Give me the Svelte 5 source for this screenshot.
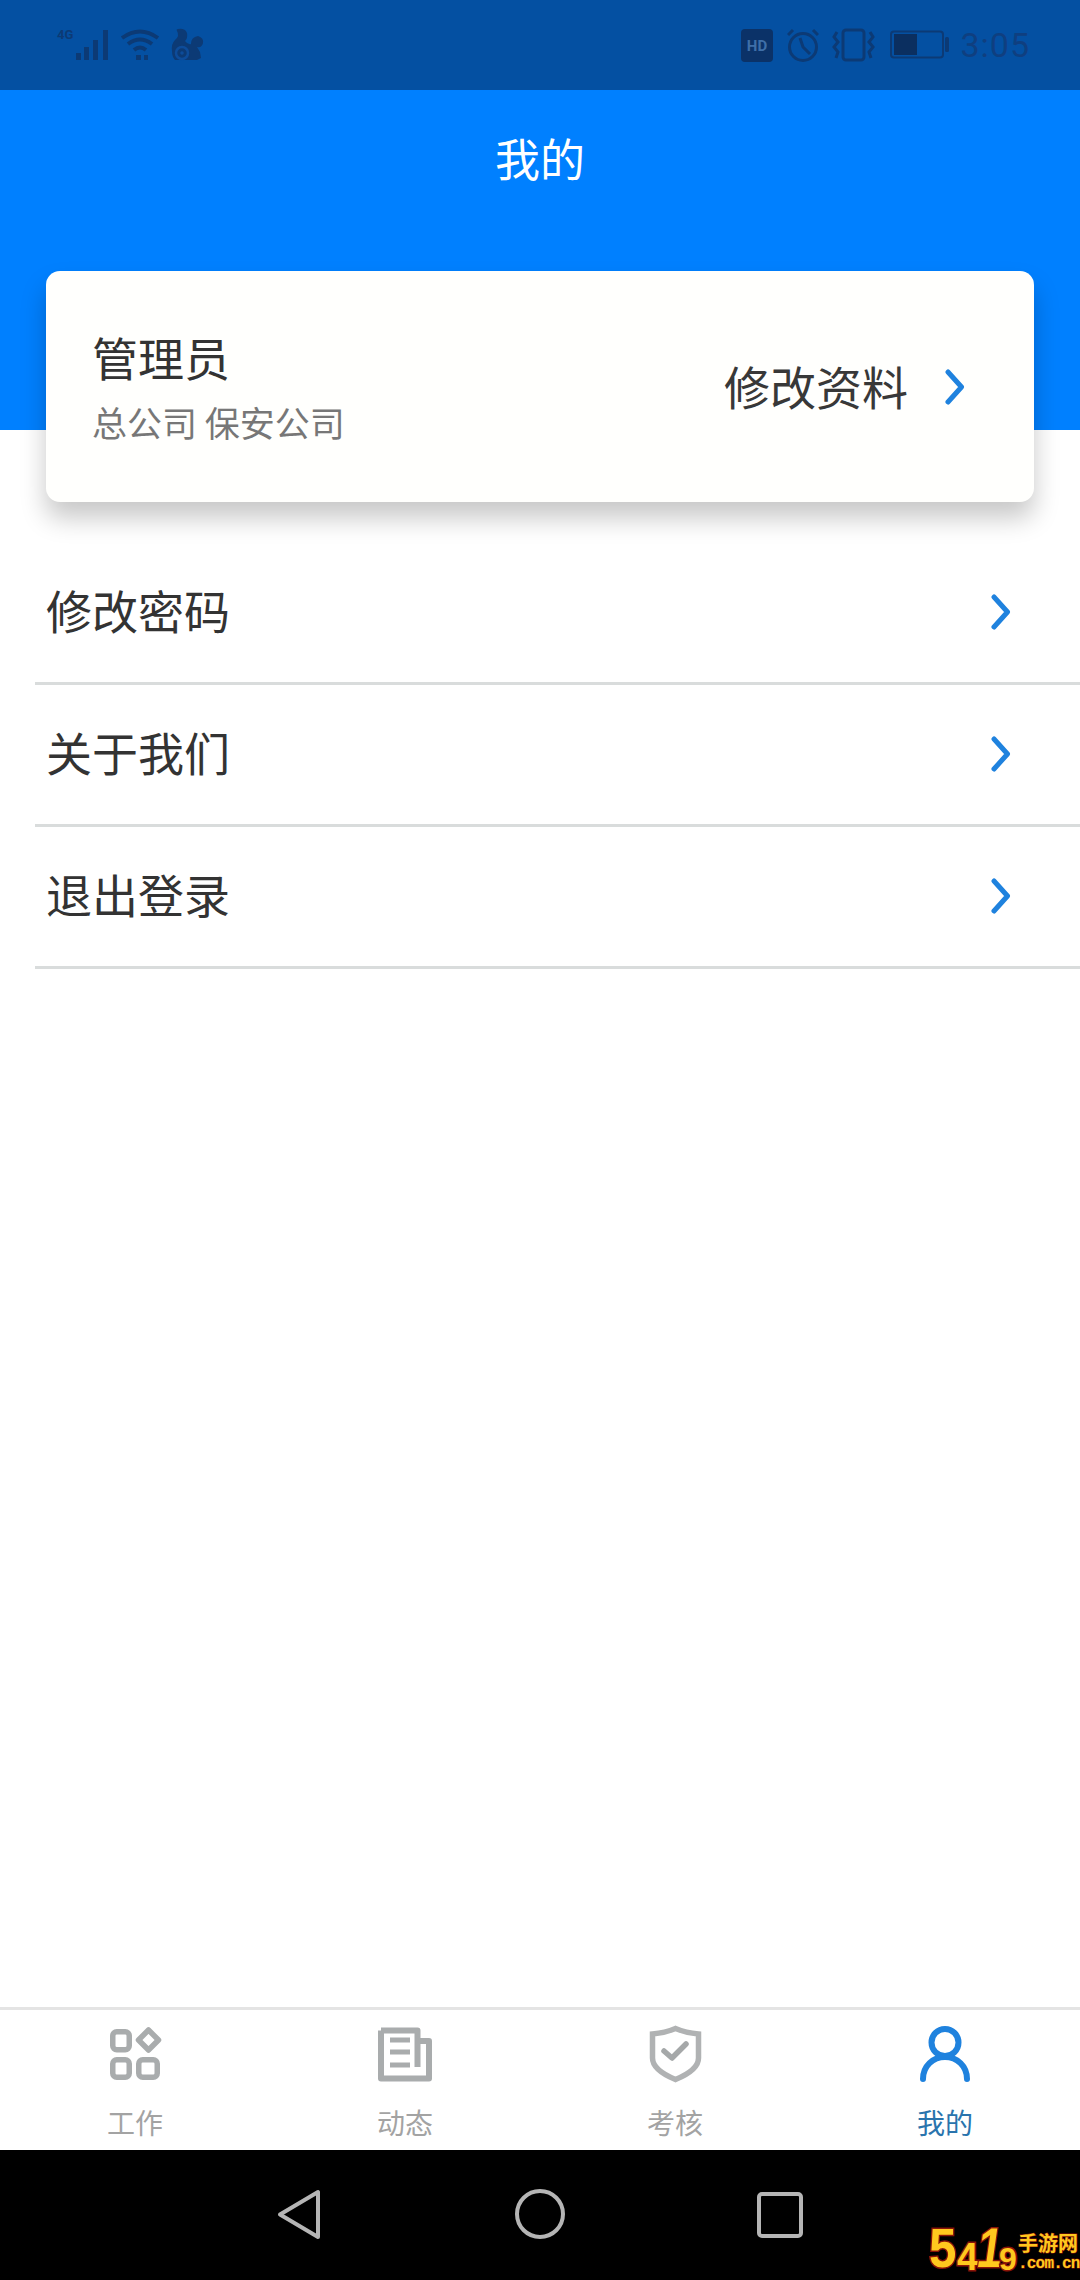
<script>
  const rows = ['修改密码', '关于我们', '退出登录'];
  const tabs = [
    { label: '工作', key: 'work' },
    { label: '动态', key: 'news' },
    { label: '考核', key: 'exam' },
    { label: '我的', key: 'me', active: true }
  ];
</script>

{#snippet chevron()}
  <svg class="chev" width="22" height="36" viewBox="0 0 22 36"><path d="M4 3 L17.500 18 L4 33" fill="none" stroke="#1f82de" stroke-width="5" stroke-linecap="round" stroke-linejoin="round"/></svg>
{/snippet}

<div class="page">
  <div class="status">
    <div class="st-left">
      <span class="net">4G</span>
      <svg width="35" height="34" viewBox="0 0 35 34" fill="#0c3a75"><rect x="1" y="25" width="5" height="7"/><rect x="9" y="19" width="5" height="13"/><rect x="18" y="12" width="5" height="20"/><rect x="28" y="2" width="5" height="30"/></svg>
      <svg class="wifi" width="40" height="34" viewBox="0 0 40 34" fill="none" stroke="#0c3a75" stroke-width="4"><path d="M2 10 Q20 -3 38 10"/><path d="M8 16 Q20 7 32 16"/><path d="M14 22 Q20 17 26 22"/><rect x="16" y="27" width="5" height="5" fill="#0c3a75" stroke="none"/><rect x="24" y="27" width="4" height="5" fill="#0c3a75" stroke="none"/></svg>
      <svg class="uc" width="36" height="36" viewBox="0 0 36 36" fill="#0c3a75"><path d="M4 24 Q3 17 7 13 Q12 9 9 4 Q8 2 10 2 Q17 1 19 6 Q20 11 17 14 Q20 18 23 17 Q23 10 30 9 Q36 11 35 16 Q34 21 29 20 L32 25 L33 31 L29 33 L7 33 Q4 30 4 24Z"/><circle cx="14" cy="26" r="6" fill="none" stroke="#0d4c9a" stroke-width="2.500"/><circle cx="14" cy="26" r="1.800" fill="#0d4c9a"/></svg>
    </div>
    <div class="st-right">
      <svg width="32" height="33" viewBox="0 0 32 33"><rect width="32" height="33" rx="4" fill="#0b3268"/><text x="16" y="22" font-size="15" font-weight="700" text-anchor="middle" fill="#3f6fa8" font-family="Roboto, sans-serif">HD</text></svg>
      <svg class="alarm" width="32" height="34" viewBox="0 0 32 34" fill="none" stroke="#0c3a75" stroke-width="3"><circle cx="16" cy="19" r="13.500"/><path d="M13 10 L16 19 L23 26"/><path d="M1 7 L6 2 M31 7 L26 2"/></svg>
      <svg class="vib" width="43" height="34" viewBox="0 0 43 34" fill="none" stroke="#0c3a75" stroke-width="3"><rect x="11" y="2" width="21" height="30" rx="3"/><path d="M5 4 L2 9 L6 14 L2 19 L6 24 L4 30"/><path d="M38 4 L41 9 L37 14 L41 19 L37 24 L39 30"/></svg>
      <svg class="batt" width="60" height="30" viewBox="0 0 60 30"><rect x="1" y="1.500" width="52" height="26" rx="3" fill="none" stroke="#0c3a75" stroke-width="2"/><rect x="4" y="4" width="23" height="21" fill="#0b2f60"/><rect x="55" y="7" width="4" height="15" rx="1.500" fill="#0c3a75"/></svg>
      <span class="time">3:05</span>
    </div>
  </div>

  <header class="head">
    <h1>我的</h1>
  </header>

  <section class="card">
    <div class="who">
      <div class="name">管理员</div>
      <div class="org">总公司 保安公司</div>
    </div>
    <div class="edit">
      <span>修改资料</span>
      {@render chevron()}
    </div>
  </section>

  <ul class="list">
    {#each rows as row}
      <li>
        <span>{row}</span>
        {@render chevron()}
      </li>
    {/each}
  </ul>

  <nav class="tabs">
    {#each tabs as t}
      <div class="tab" class:active={t.active}>
        <svg width="60" height="60" viewBox="0 0 60 60" fill="none">
          {#if t.key === 'work'}
            <g stroke="#a9acad" stroke-width="5.500">
              <rect x="7.750" y="8.750" width="16.500" height="18" rx="4"/>
              <rect x="7.750" y="36.750" width="16.500" height="17.500" rx="4"/>
              <rect x="33.750" y="36.750" width="18.500" height="17.500" rx="4"/>
              <path d="M43.500 7 L53.500 17 L43.500 27 L33.500 17Z" stroke-linejoin="round"/>
            </g>
          {:else if t.key === 'news'}
            <g stroke="#a9acad" stroke-width="6" stroke-linejoin="round">
              <path d="M6 7.500 H42.500 V44 M43 18 H54 V55.500 H6 V7.500"/>
              <path d="M15 17 H35 M15 29 H35 M15 42 H35" stroke-width="5"/>
            </g>
          {:else if t.key === 'exam'}
            <path d="M7.500 11 Q20 10 30.500 5.500 Q41 10 53.500 11 V35 Q53.500 47 30.500 56.500 Q7.500 47 7.500 35Z" stroke="#b0b2b3" stroke-width="5.500"/>
            <path d="M19 28 L27 35 L41 21" stroke="#a5a8a9" stroke-width="5.500" stroke-linecap="round" stroke-linejoin="round"/>
          {:else}
            <circle cx="30" cy="19.500" r="13.500" stroke="#1f82de" stroke-width="6"/>
            <path d="M8 56 C8 43 18 34 30 34 C42 34 52 43 52 56" stroke="#1f82de" stroke-width="6" stroke-linecap="round"/>
          {/if}
        </svg>
        <span>{t.label}</span>
      </div>
    {/each}
  </nav>

  <div class="sys">
    <svg class="back" width="46" height="52" viewBox="0 0 46 52"><path d="M41 3 V48 L3 25.500Z" fill="none" stroke="#b5b5b5" stroke-width="4" stroke-linejoin="round"/></svg>
    <svg class="home" width="50" height="50" viewBox="0 0 50 50"><circle cx="25" cy="25" r="23" fill="none" stroke="#b5b5b5" stroke-width="4"/></svg>
    <svg class="recent" width="46" height="46" viewBox="0 0 46 46"><rect x="2" y="2" width="42" height="42" rx="3" fill="none" stroke="#b5b5b5" stroke-width="4"/></svg>
    <div class="mark">
      <span class="g g5">5</span><span class="g g4">4</span><span class="g g1">1</span><span class="g g9">9</span>
      <span class="mcn">手游网</span>
      <span class="mcom">.com.cn</span>
    </div>
  </div>
</div>

<style>
  :global(body) { margin: 0; background: #fff; }
  .page {
    width: 1080px; height: 2280px; position: relative; overflow: hidden;
    display: flex; flex-direction: column; background: #fff;
    font-family: "Noto Sans CJK SC", "Noto Sans", sans-serif;
  }
  .status {
    height: 90px; flex: none; background: #0450a2;
    display: flex; justify-content: space-between; align-items: center;
    padding: 0 50px 0 57px; box-sizing: border-box;
  }
  .st-left, .st-right { display: flex; align-items: center; }
  .net { font: 700 13px Roboto, sans-serif; color: #0c3a75; width: 18px; margin-top: -22px; }
  .wifi { margin-left: 10px; }
  .uc { margin-left: 8px; }
  .alarm { margin-left: 14px; }
  .vib { margin-left: 13px; }
  .batt { margin-left: 15px; }
  .time { font: 400 34px Roboto, sans-serif; color: #0f3f80; letter-spacing: 1px; margin-left: 10px; }

  .head { height: 340px; flex: none; background: #0080ff; text-align: center; box-sizing: border-box; }
  .head h1 { margin: 0; padding-top: 41px; font-size: 45px; line-height: 54px; font-weight: 400; color: #fff; }

  .card {
    flex: none; height: 231px; margin: -159px 46px 0; box-sizing: border-box;
    background: #fffffd; border-radius: 14px; position: relative;
    box-shadow: 0 16px 26px rgba(0,0,0,.22);
    display: flex; justify-content: space-between; align-items: center;
    padding: 0 68px 0 46px;
  }
  .name { font-size: 46px; line-height: 60px; color: #333; margin-top: -3px; }
  .org { font-size: 35px; line-height: 46px; color: #777; margin-top: 13px; }
  .edit { display: flex; align-items: center; gap: 36px; font-size: 46px; color: #383838; }
  .edit span { margin-top: -4px; }

  .list { list-style: none; margin: 41px 0 0 35px; padding: 0; flex: none; }
  .list li {
    height: 142px; box-sizing: border-box; border-bottom: 3px solid #d9dcdc;
    display: flex; align-items: center; justify-content: space-between;
    padding: 0 68px 2px 11px; font-size: 46px; color: #333;
  }
  .list li span { margin-top: -6px; }

  .tabs {
    margin-top: auto; height: 143px; flex: none; box-sizing: border-box;
    border-top: 3px solid #e4e4e4; background: #fff;
    display: grid; grid-template-columns: repeat(4, 1fr);
  }
  .tab { display: flex; flex-direction: column; align-items: center; padding-top: 13px; color: #a3a3a3; font-size: 28px; }
  .tab svg { display: block; }
  .tab span { line-height: 36px; margin-top: 21px; }
  .tab.active { color: #2a74ad; }

  .sys { height: 130px; flex: none; background: #000; position: relative; }
  .back { position: absolute; left: 277px; top: 39px; }
  .home { position: absolute; left: 515px; top: 39px; }
  .recent { position: absolute; left: 757px; top: 42px; }

  .mark { position: absolute; left: 928px; top: 70px; width: 152px; height: 58px; color: #ffc81e; }
  .g {
    position: absolute; font-family: "Liberation Sans", sans-serif; font-weight: 700;
    -webkit-text-stroke: 3px #8a1408; paint-order: stroke fill; line-height: 1;
  }
  .g5 { left: 1px; top: 0; font-size: 56px; transform: scaleX(.88); transform-origin: left; }
  .g4 { left: 29px; top: 18px; font-size: 38px; }
  .g1 { left: 50px; top: 0; font-size: 56px; transform: skewX(-8deg) scaleX(.8); transform-origin: left; }
  .g9 { left: 71px; top: 23px; font-size: 32px; }
  .mcn {
    position: absolute; left: 90px; top: 13px; font-size: 20px; line-height: 20px; font-weight: 700;
    white-space: nowrap; -webkit-text-stroke: 1px #8a1408; paint-order: stroke fill;
  }
  .mcom {
    position: absolute; left: 90px; top: 36px; font: 700 16px/16px "Liberation Mono", monospace;
    white-space: nowrap; letter-spacing: -.8px; -webkit-text-stroke: 1px #8a1408; paint-order: stroke fill;
  }
</style>
